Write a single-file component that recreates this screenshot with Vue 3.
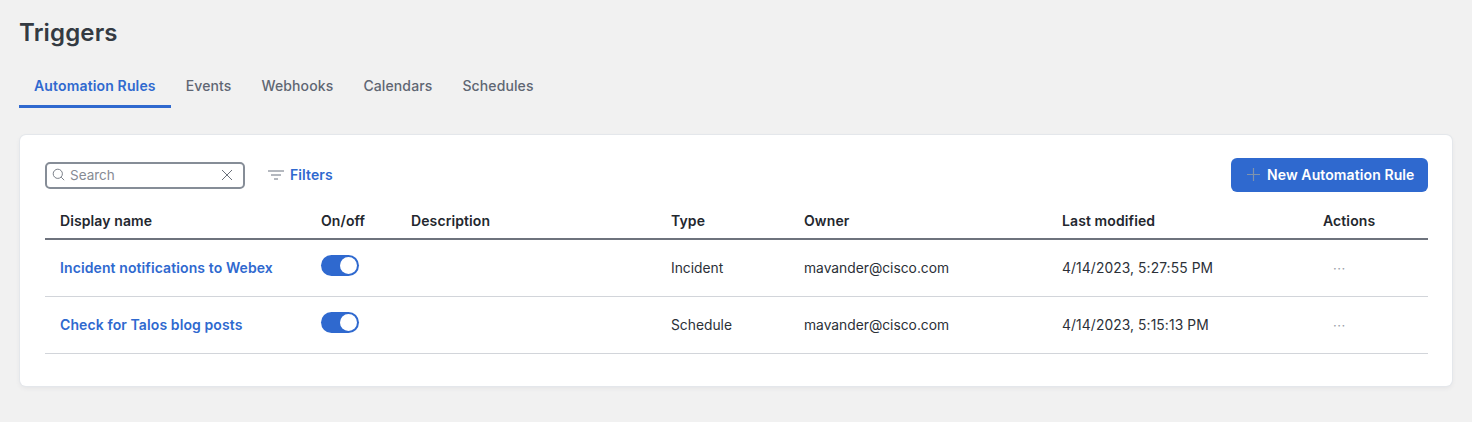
<script setup>
const tabs = ['Automation Rules', 'Events', 'Webhooks', 'Calendars', 'Schedules']
const columns = ['Display name', 'On/off', 'Description', 'Type', 'Owner', 'Last modified', 'Actions']
const rows = [
  { name: 'Incident notifications to Webex', type: 'Incident', owner: 'mavander@cisco.com', modified: '4/14/2023, 5:27:55 PM' },
  { name: 'Check for Talos blog posts', type: 'Schedule', owner: 'mavander@cisco.com', modified: '4/14/2023, 5:15:13 PM' }
]
</script>

<template>
  <div class="page">
    <h1 class="title">Triggers</h1>
    <ul class="tabs">
      <li v-for="(tab, idx) in tabs" :key="tab" :class="idx === 0 ? 'current' : ''">{{ tab }}</li>
    </ul>

    <div class="card">
      <div class="toolbar">
        <div class="search">
          <svg class="lens" width="13" height="13" viewBox="0 0 13 13" fill="none" stroke="#7b8089" stroke-width="1">
            <circle cx="5.8" cy="5.8" r="4.6" />
            <path d="M9.2 9.2 12.2 12.2" />
          </svg>
          <span class="placeholder">Search</span>
          <svg class="clear" width="12" height="12" viewBox="0 0 12 12" fill="none" stroke="#6b717b" stroke-width="1">
            <path d="M1 1 11 11M11 1 1 11" />
          </svg>
        </div>
        <div class="filters">
          <svg width="16" height="10" viewBox="0 0 16 10" fill="none" stroke="#6b7280" stroke-width="1">
            <path d="M0 1H16M3 5H13M6 9H10" />
          </svg>
          <span>Filters</span>
        </div>
        <button class="new-btn">
          <svg width="13" height="13" viewBox="0 0 13 13" fill="none" stroke="#7f93ad" stroke-width="1.2">
            <path d="M6.5 0V13M0 6.5H13" />
          </svg>
          New Automation Rule
        </button>
      </div>

      <div class="row head">
        <div v-for="col in columns" :key="col">{{ col }}</div>
      </div>
      <div v-for="row in rows" :key="row.name" class="row body">
        <div class="name">{{ row.name }}</div>
        <div><span class="switch"><span class="knob"></span></span></div>
        <div></div>
        <div>{{ row.type }}</div>
        <div>{{ row.owner }}</div>
        <div class="modified">{{ row.modified }}</div>
        <div class="dots">···</div>
      </div>
    </div>
  </div>
</template>

<style>
html,
body {
  background: #f1f1f1;
}
</style>

<style scoped>
.page {
  height: 422px;
  box-sizing: border-box;
  padding: 18px 20px 0;
  background: #f1f1f1;
  font-family: Inter, 'Noto Sans', sans-serif;
  overflow: hidden;
}
.title {
  margin: 0 0 0 -1px;
  font-size: 24px;
  line-height: 30px;
  font-weight: 600;
  letter-spacing: 0.15px;
  color: #343a42;
}
.tabs {
  display: flex;
  margin: 20px 0 0 -1px;
  padding: 0;
  list-style: none;
}
.tabs li {
  padding: 0 15px;
  height: 40px;
  box-sizing: border-box;
  line-height: 36px;
  font-size: 14px;
  font-weight: 500;
  letter-spacing: 0.12px;
  color: #5f6673;
  border-bottom: 3px solid transparent;
}
.tabs li.current {
  color: #2f69cf;
  font-weight: 600;
  letter-spacing: 0.15px;
  border-bottom-color: #2f69cf;
}
.card {
  margin-top: 27px;
  height: 251px;
  box-sizing: border-box;
  padding: 23px 24px 0 25px;
  background: #fff;
  border-radius: 6px;
  box-shadow: 0 0 0 1px #e4e7eb, 0 2px 5px rgba(60, 70, 85, 0.08);
}
.toolbar {
  display: flex;
  align-items: center;
  height: 34px;
}
.search {
  display: flex;
  align-items: center;
  width: 200px;
  height: 27px;
  box-sizing: border-box;
  padding: 0 10px 0 5px;
  border: 2px solid #868d97;
  border-radius: 5px;
}
.lens {
  margin-top: -1px;
}
.placeholder {
  margin-left: 5px;
  font-size: 13.5px;
  line-height: 16px;
  color: #868b94;
}
.clear {
  margin-left: auto;
}
.filters {
  display: flex;
  align-items: center;
  gap: 6px;
  margin-left: 23px;
  font-size: 14px;
  line-height: 16px;
  font-weight: 600;
  letter-spacing: 0.1px;
  color: #2f69cf;
}
.new-btn {
  display: flex;
  align-items: center;
  gap: 7px;
  margin-left: auto;
  width: 197px;
  height: 34px;
  padding: 0 0 1px 16px;
  border: 0;
  border-radius: 6px;
  background: #2f69cf;
  color: #fff;
  font: 600 14px/16px Inter, sans-serif;
  letter-spacing: 0.1px;
}
.row {
  display: grid;
  grid-template-columns: 261px 90px 260px 133px 258px 261px 120px;
  align-items: center;
  padding-left: 15px;
  font-size: 13.8px;
  color: #2b3037;
}
.row > div {
  margin-right: -15px;
}
.head {
  height: 48px;
  padding-top: 10px;
  box-sizing: border-box;
  font-size: 14px;
  font-weight: 600;
  letter-spacing: 0.1px;
  color: #23272e;
  border-bottom: 2px solid #6e737d;
}
.body {
  height: 57px;
  box-sizing: border-box;
  border-bottom: 1px solid #d2d5da;
}
.name {
  font-size: 14px;
  line-height: 16px;
  font-weight: 600;
  letter-spacing: 0.1px;
  color: #2f69cf;
}
.modified {
  letter-spacing: 0.1px;
}
.switch {
  display: block;
  position: relative;
  top: -3px;
  width: 38px;
  height: 21px;
  border-radius: 11px;
  background: #2f69cf;
}
.knob {
  position: absolute;
  top: 2px;
  right: 2px;
  width: 17px;
  height: 17px;
  border-radius: 50%;
  background: #fff;
}
.dots {
  padding-left: 10px;
  font-size: 13px;
  color: #9aa0a9;
  letter-spacing: 0.5px;
}
</style>
